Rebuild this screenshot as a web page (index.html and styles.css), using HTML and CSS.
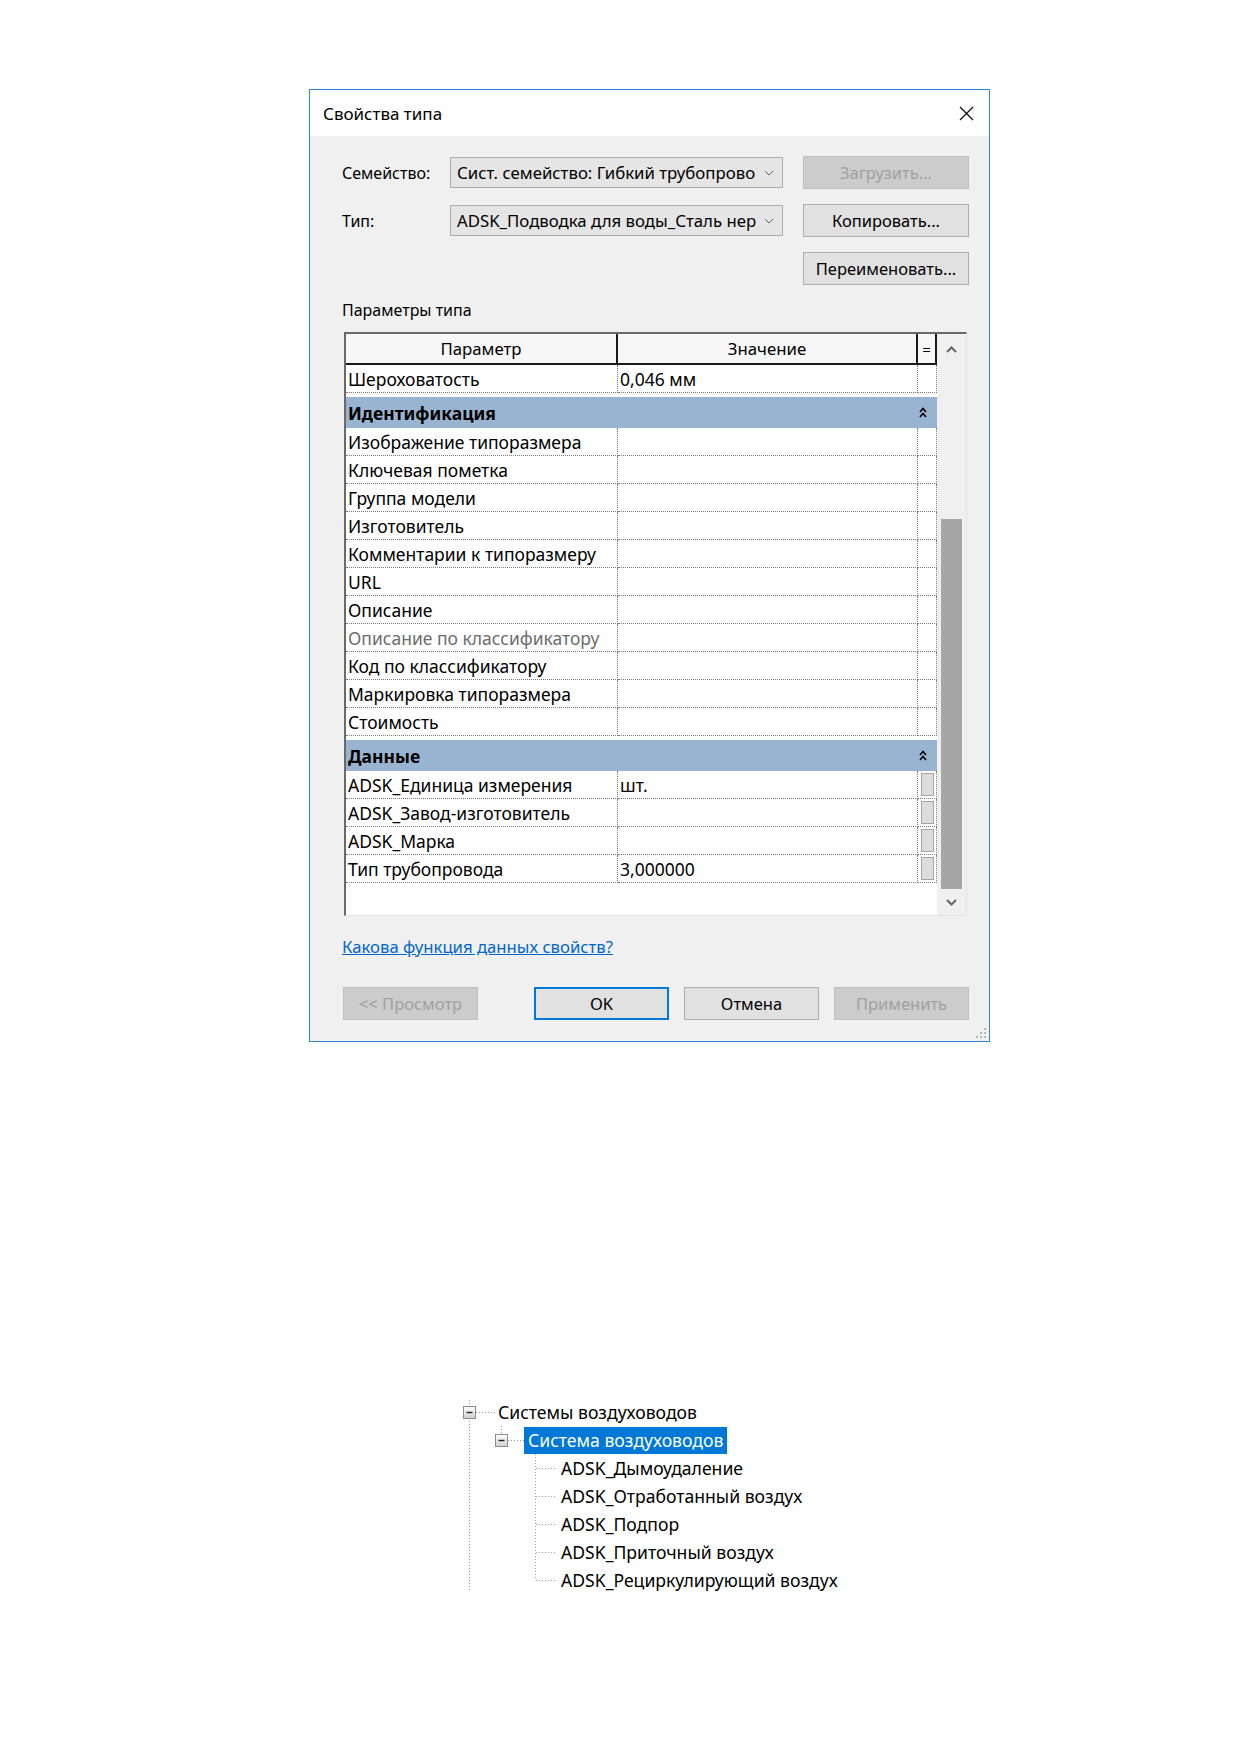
FILE: index.html
```html
<!DOCTYPE html>
<html lang="ru">
<head>
    <meta charset="UTF-8">
    <meta name="viewport" content="width=device-width, initial-scale=1.0">
    <title>Свойства типа</title>
    <link rel="stylesheet" href="styles.css">
</head>
<body>
<div class="page">
<div class="dialog">
    <div class="titlebar">
        <span>Свойства типа</span>
        <svg class="close" width="15" height="15" viewBox="0 0 15 15">
            <path d="M1 1 L14 14 M14 1 L1 14" stroke="#111" stroke-width="1.3" fill="none"/>
        </svg>
    </div>
    <div class="content">
        <div class="typeForm">
            <label class="fieldLabel">Семейство:</label>
            <div class="combo">
                <span class="comboText">Сист. семейство: Гибкий трубопрово</span>
                <svg width="10" height="6" viewBox="0 0 10 6"><path d="M1 1 L5 5 L9 1" stroke="#666" stroke-width="1" fill="none"/></svg>
            </div>
            <button class="btn disabled">Загрузить...</button>

            <label class="fieldLabel">Тип:</label>
            <div class="combo">
                <span class="comboText">ADSK_Подводка для воды_Сталь нер</span>
                <svg width="10" height="6" viewBox="0 0 10 6"><path d="M1 1 L5 5 L9 1" stroke="#666" stroke-width="1" fill="none"/></svg>
            </div>
            <button class="btn">Копировать...</button>

            <button class="btn rename">Переименовать...</button>
        </div>

        <div class="sectionLabel">Параметры типа</div>

        <div class="props">
            <div class="grid">
                <div class="head">Параметр</div>
                <div class="head">Значение</div>
                <div class="head eq">=</div>

                <div class="cell">Шероховатость</div>
                <div class="cell">0,046 мм</div>
                <div class="cell"></div>

                <div class="group">
                    <span>Идентификация</span>
                    <svg width="8" height="11" viewBox="0 0 8 11"><path d="M1 5 L4 1.5 L7 5 M1 10 L4 6.5 L7 10" stroke="#000" stroke-width="1.6" fill="none"/></svg>
                </div>

                <div class="cell">Изображение типоразмера</div><div class="cell"></div><div class="cell"></div>
                <div class="cell">Ключевая пометка</div><div class="cell"></div><div class="cell"></div>
                <div class="cell">Группа модели</div><div class="cell"></div><div class="cell"></div>
                <div class="cell">Изготовитель</div><div class="cell"></div><div class="cell"></div>
                <div class="cell">Комментарии к типоразмеру</div><div class="cell"></div><div class="cell"></div>
                <div class="cell">URL</div><div class="cell"></div><div class="cell"></div>
                <div class="cell">Описание</div><div class="cell"></div><div class="cell"></div>
                <div class="cell muted">Описание по классификатору</div><div class="cell"></div><div class="cell"></div>
                <div class="cell">Код по классификатору</div><div class="cell"></div><div class="cell"></div>
                <div class="cell">Маркировка типоразмера</div><div class="cell"></div><div class="cell"></div>
                <div class="cell">Стоимость</div><div class="cell"></div><div class="cell"></div>

                <div class="group">
                    <span>Данные</span>
                    <svg width="8" height="11" viewBox="0 0 8 11"><path d="M1 5 L4 1.5 L7 5 M1 10 L4 6.5 L7 10" stroke="#000" stroke-width="1.6" fill="none"/></svg>
                </div>

                <div class="cell">ADSK_Единица измерения</div><div class="cell">шт.</div><div class="cell"><span class="pick"></span></div>
                <div class="cell">ADSK_Завод-изготовитель</div><div class="cell"></div><div class="cell"><span class="pick"></span></div>
                <div class="cell">ADSK_Марка</div><div class="cell"></div><div class="cell"><span class="pick"></span></div>
                <div class="cell">Тип трубопровода</div><div class="cell">3,000000</div><div class="cell"><span class="pick"></span></div>
            </div>
            <div class="scrollbar">
                <div class="arrow up">
                    <svg width="11" height="7" viewBox="0 0 11 7"><path d="M1 6 L5.5 1.5 L10 6" stroke="#666" stroke-width="2" fill="none"/></svg>
                </div>
                <div class="track"><div class="thumb"></div></div>
                <div class="arrow down">
                    <svg width="11" height="7" viewBox="0 0 11 7"><path d="M1 1 L5.5 5.5 L10 1" stroke="#666" stroke-width="2" fill="none"/></svg>
                </div>
            </div>
        </div>

        <a class="helpLink" href="#">Какова функция данных свойств?</a>

        <div class="buttons">
            <button class="btn wide disabled preview">&lt;&lt; Просмотр</button>
            <button class="btn wide default">OK</button>
            <button class="btn wide">Отмена</button>
            <button class="btn wide disabled">Применить</button>
        </div>
    </div>
    <svg class="grip" width="12" height="12" viewBox="0 0 12 12">
        <rect x="9" y="1" width="2" height="2" fill="#b8b8b8"/>
        <rect x="5" y="5" width="2" height="2" fill="#b8b8b8"/>
        <rect x="9" y="5" width="2" height="2" fill="#b8b8b8"/>
        <rect x="1" y="9" width="2" height="2" fill="#b8b8b8"/>
        <rect x="5" y="9" width="2" height="2" fill="#b8b8b8"/>
        <rect x="9" y="9" width="2" height="2" fill="#b8b8b8"/>
    </svg>
</div>

<div class="tree">
    <svg class="treeLines" width="420" height="196" viewBox="0 0 420 196">
        <g stroke="#9a9a9a" stroke-width="1" stroke-dasharray="1 2" fill="none">
            <path d="M29.5 2 V193"/>
            <path d="M36 14.5 H55"/>
            <path d="M61.5 28 V37"/>
            <path d="M68 42.5 H84"/>
            <path d="M95.5 56 V182"/>
            <path d="M96 70.5 H115 M96 98.5 H115 M96 126.5 H115 M96 154.5 H115 M96 182.5 H115"/>
        </g>
        <g>
            <rect x="23.5" y="8.5" width="12" height="12" fill="url(#boxFill)" stroke="#8c8c8c"/>
            <path d="M26.5 14.5 H32.5" stroke="#222" stroke-width="1.4"/>
            <rect x="55.5" y="36.5" width="12" height="12" fill="url(#boxFill)" stroke="#8c8c8c"/>
            <path d="M58.5 42.5 H64.5" stroke="#222" stroke-width="1.4"/>
        </g>
        <defs>
            <linearGradient id="boxFill" x1="0" y1="0" x2="0" y2="1">
                <stop offset="0" stop-color="#ffffff"/>
                <stop offset="1" stop-color="#cfcfcf"/>
            </linearGradient>
        </defs>
    </svg>
    <div class="treeList">
        <div class="treeRow lvl0">Системы воздуховодов</div>
        <div class="treeRow lvl1"><span class="selected">Система воздуховодов</span></div>
        <div class="treeRow lvl2">ADSK_Дымоудаление</div>
        <div class="treeRow lvl2">ADSK_Отработанный воздух</div>
        <div class="treeRow lvl2">ADSK_Подпор</div>
        <div class="treeRow lvl2">ADSK_Приточный воздух</div>
        <div class="treeRow lvl2">ADSK_Рециркулирующий воздух</div>
    </div>
</div>
</div>
</body>
</html>
```

FILE: styles.css
```css
body {
    margin: 0;
    padding: 0;
    background-color: #FFF;
    font-family: "Noto Sans", "Open Sans", sans-serif;
    color: #000;
}

.page {
    width: 1239px;
    height: 1752px;
    padding-top: 89px;
    box-sizing: border-box;
}

.dialog {
    position: relative;
    margin-left: 309px;
    width: 681px;
    height: 953px;
    box-sizing: border-box;
    border: 1px solid #2b88d8;
    background-color: #F0F0F0;
    display: flex;
    flex-direction: column;
}

.titlebar {
    height: 46px;
    background-color: #FFF;
    display: flex;
    align-items: center;
    justify-content: space-between;
    padding: 0 15px 0 13px;
    font-size: 17px;
}

.content {
    padding: 20px 20px 0 32px;
    display: flex;
    flex-direction: column;
}

/* family / type pickers */
.typeForm {
    display: grid;
    grid-template-columns: 108px 353px 166px;
    grid-auto-rows: 33px;
    row-gap: 15px;
    align-items: center;
}

.fieldLabel {
    font-size: 16px;
}

.combo {
    width: 333px;
    height: 31px;
    box-sizing: border-box;
    border: 1px solid #ACACAC;
    background-color: #E5E5E5;
    display: flex;
    align-items: center;
    padding: 0 8px 0 6px;
    font-size: 16.8px;
}

.comboText {
    flex: 1;
    white-space: nowrap;
    overflow: hidden;
    margin-right: 6px;
}

.btn {
    height: 33px;
    box-sizing: border-box;
    border: 1px solid #ADADAD;
    background-color: #E1E1E1;
    font-family: inherit;
    font-size: 16.5px;
    color: #000;
    padding: 0;
}

.btn.disabled {
    background-color: #CCCCCC;
    border-color: #BFBFBF;
    color: #A0A0A0;
}

.btn.default {
    border: 2px solid #0078D7;
}

.rename {
    grid-column: 3;
}

.sectionLabel {
    margin-top: 15px;
    line-height: 20px;
    font-size: 16px;
}

/* property grid */
.props {
    margin: 12px 0 0 2px;
    width: 623px;
    height: 584px;
    box-sizing: border-box;
    border-top: 2px solid #6A6A6A;
    border-left: 2px solid #6A6A6A;
    border-right: 1px solid #E3E3E3;
    border-bottom: 1px solid #E3E3E3;
    background-color: #FFF;
    display: flex;
}

.grid {
    width: 591px;
    display: grid;
    grid-template-columns: 272px 300px 19px;
    align-content: start;
    font-size: 17.5px;
}

.head {
    height: 31px;
    box-sizing: border-box;
    background-color: #F7F7F7;
    border-right: 2px solid #1A1A1A;
    border-bottom: 2px solid #1A1A1A;
    display: flex;
    align-items: center;
    justify-content: center;
    font-size: 16.8px;
}

.head.eq {
    font-size: 15px;
}

.cell {
    height: 28px;
    box-sizing: border-box;
    border-right: 1px dotted #7A7A7A;
    border-bottom: 1px dotted #7A7A7A;
    padding-left: 2px;
    display: flex;
    align-items: center;
    white-space: nowrap;
    overflow: hidden;
}

.cell.muted {
    color: #6D6D6D;
}

.group {
    grid-column: 1 / -1;
    height: 35px;
    box-sizing: border-box;
    border-top: 4px solid #FFF;
    background-color: #99B4D1;
    display: flex;
    align-items: center;
    justify-content: space-between;
    padding: 0 10px 0 2px;
    font-weight: bold;
}

.pick {
    width: 13px;
    height: 23px;
    box-sizing: border-box;
    border: 1px solid #A5A5A5;
    background-color: #DCDCDC;
    margin-left: 1px;
}

.scrollbar {
    width: 29px;
    background-color: #F0F0F0;
    display: flex;
    flex-direction: column;
}

.arrow {
    display: flex;
    align-items: center;
    justify-content: center;
}

.arrow.up {
    height: 30px;
}

.arrow.down {
    height: 26px;
}

.track {
    flex: 1;
    display: flex;
    justify-content: center;
}

.thumb {
    width: 21px;
    height: 370px;
    margin-top: 155px;
    background-color: #A6A6A6;
}

.helpLink {
    margin-top: 21px;
    line-height: 20px;
    font-size: 16.7px;
    color: #0066CC;
    text-decoration: underline;
    align-self: flex-start;
}

.buttons {
    margin-top: 30px;
    display: flex;
    gap: 15px;
}

.btn.wide {
    width: 135px;
}

.preview {
    margin-left: 1px;
    margin-right: auto;
}

.grip {
    position: absolute;
    right: 2px;
    bottom: 2px;
}

/* tree */
.tree {
    margin: 356px 0 0 440px;
    width: 420px;
    height: 196px;
    display: grid;
}

.treeLines,
.treeList {
    grid-area: 1 / 1;
}

.treeRow {
    height: 28px;
    display: flex;
    align-items: center;
    font-size: 17.6px;
    white-space: nowrap;
}

.lvl0 {
    padding-left: 58px;
}

.lvl1 {
    padding-left: 84px;
}

.lvl2 {
    padding-left: 121px;
}

.selected {
    background-color: #0078D7;
    color: #FFF;
    height: 27px;
    line-height: 27px;
    padding: 0 4px;
}
```
